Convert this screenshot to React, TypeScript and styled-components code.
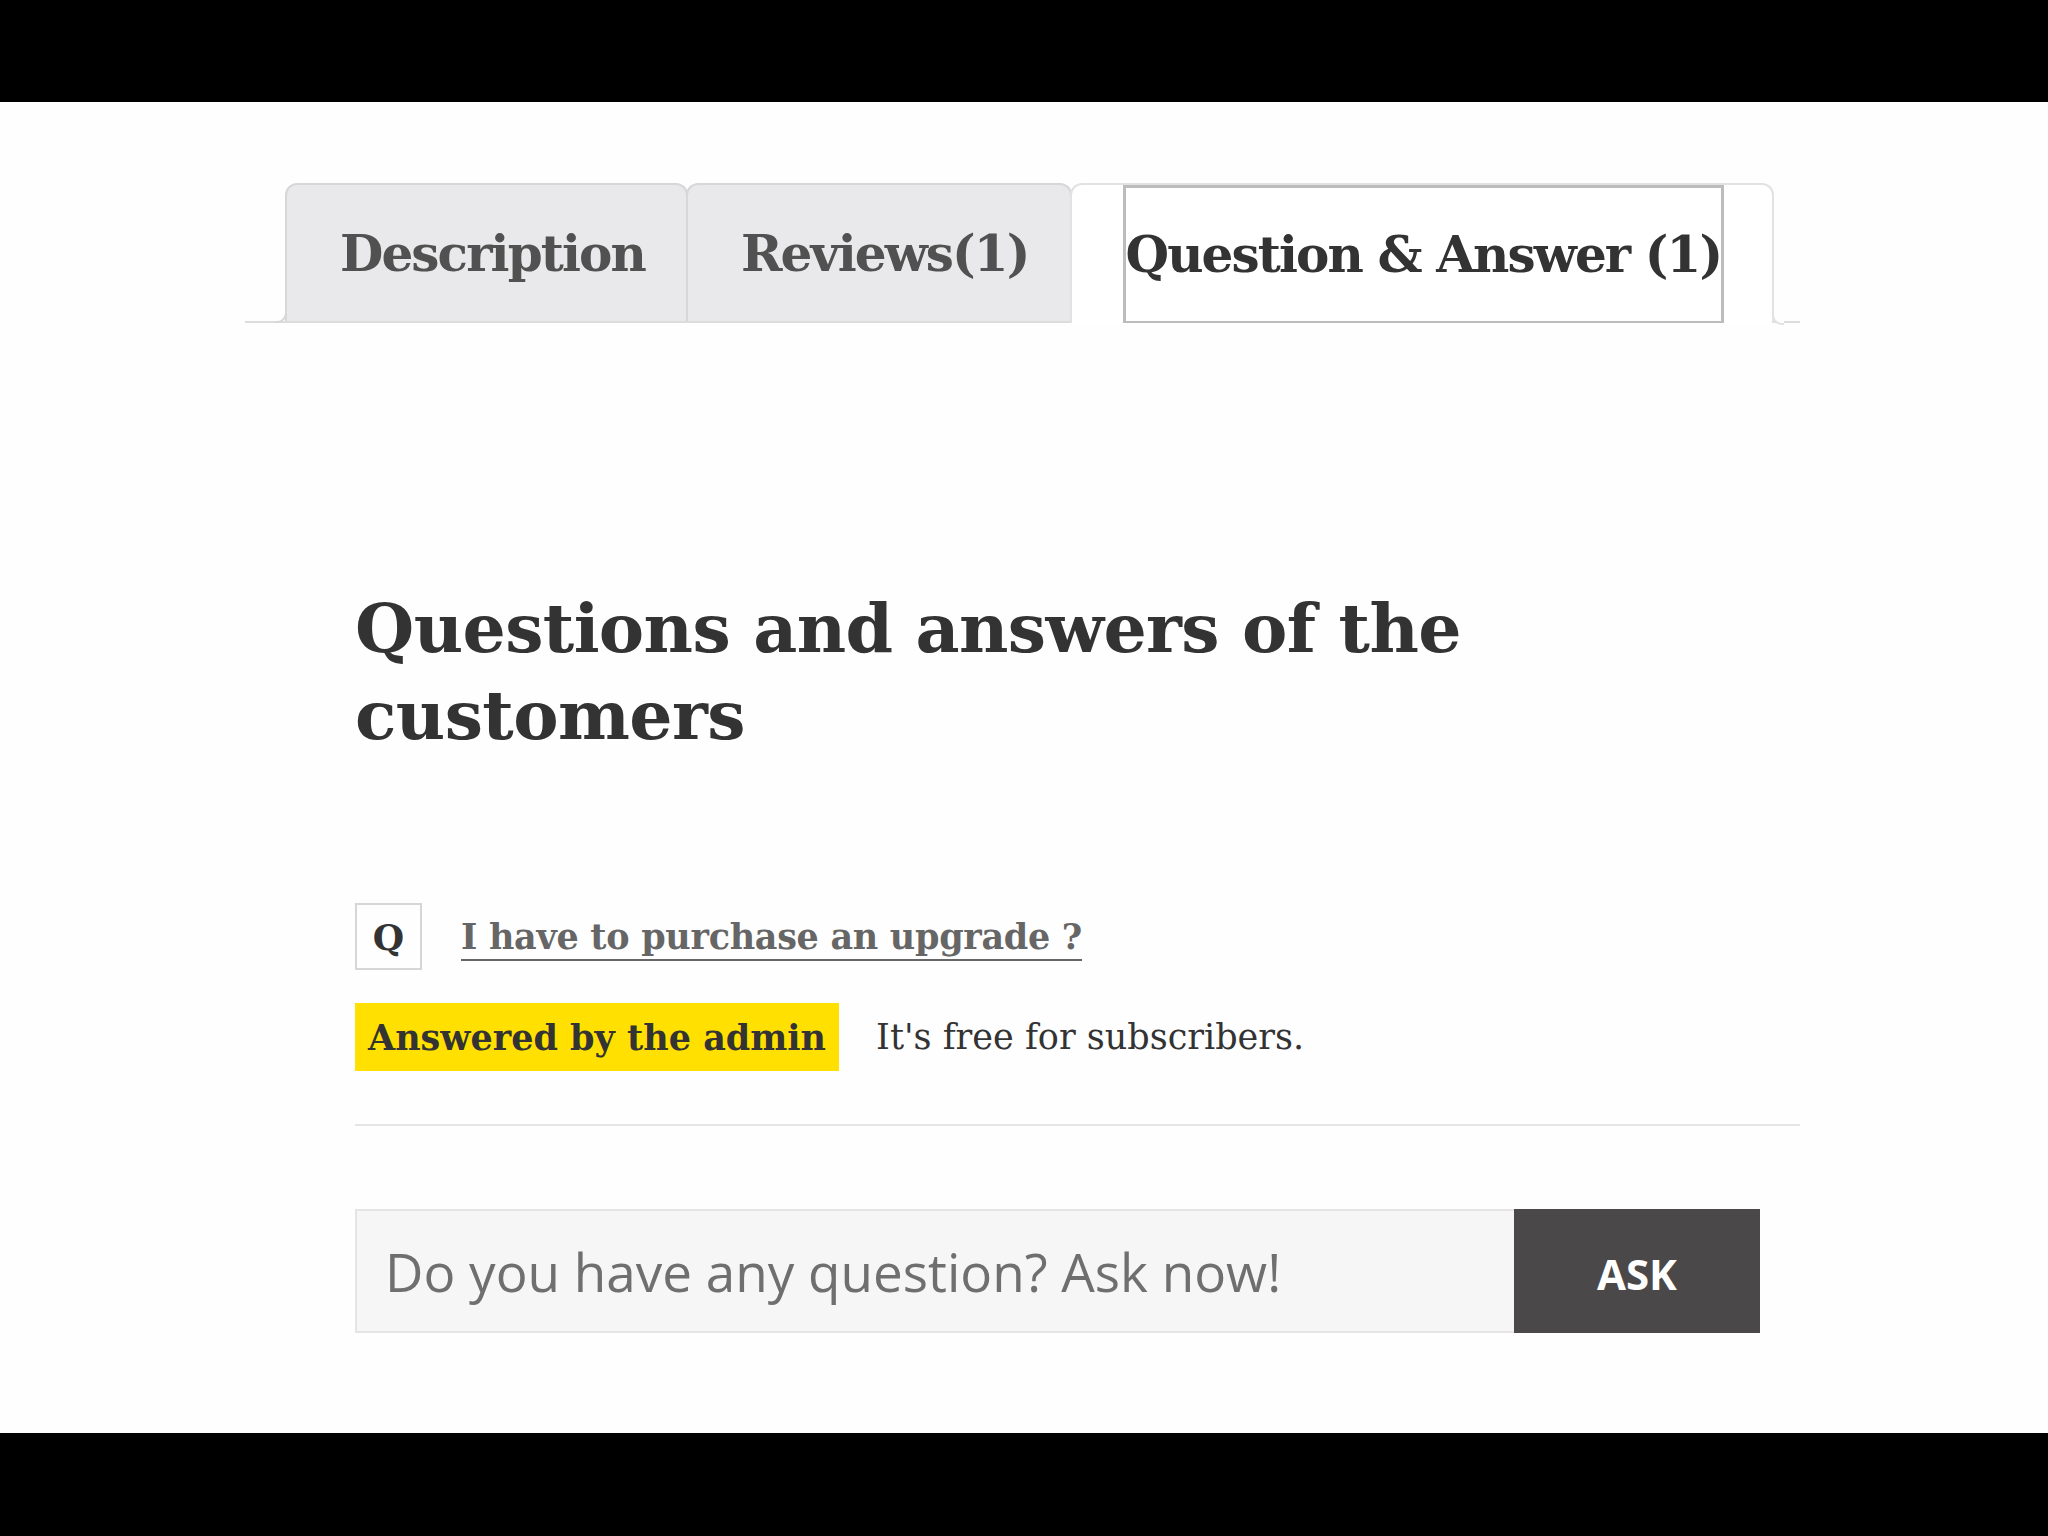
import { FC } from "react";
import styled, { createGlobalStyle } from "styled-components";

const GlobalStyle = createGlobalStyle`
  html, body {
    margin: 0;
    padding: 0;
    background: #000;
  }
  * {
    box-sizing: border-box;
  }
`;

const serif = `"DejaVu Serif", "Liberation Serif", serif`;
const sans = `"Open Sans", "Noto Sans", sans-serif`;

const tabs = [
  { id: 'description', label: 'Description' },
  { id: 'reviews', label: 'Reviews(1)' },
  { id: 'qa', label: 'Question & Answer (1)' },
];

const App: FC = () => {
  const activeTab = 'qa';

  return (
    <>
      <GlobalStyle />
      <S.Page>
        <S.Bar height={102} />
        <S.Main>
          <S.TabList>
            {tabs.map((tab, i) => (
              <S.Tab key={tab.id} active={tab.id === activeTab} first={i === 0}>
                <S.TabLink active={tab.id === activeTab}>{tab.label}</S.TabLink>
              </S.Tab>
            ))}
          </S.TabList>
          <S.Panel>
            <S.Heading>Questions and answers of the customers</S.Heading>
            <S.QuestionRow>
              <S.QBadge>Q</S.QBadge>
              <S.QuestionText>I have to purchase an upgrade ?</S.QuestionText>
            </S.QuestionRow>
            <S.AnswerRow>
              <S.AnswerBadge>Answered by the admin</S.AnswerBadge>
              <S.AnswerText>It's free for subscribers.</S.AnswerText>
            </S.AnswerRow>
            <S.Divider />
            <S.AskForm onSubmit={(e: React.FormEvent) => e.preventDefault()}>
              <S.AskInput type="text" placeholder="Do you have any question? Ask now!" />
              <S.AskButton type="submit">ASK</S.AskButton>
            </S.AskForm>
          </S.Panel>
        </S.Main>
        <S.Bar height={103} />
      </S.Page>
    </>
  );
};

export default App;

const S = {
  Page: styled.div`
    display: flex;
    flex-direction: column;
    width: 2048px;
    height: 1536px;
  `,
  Bar: styled.div<{ height: number }>`
    flex-shrink: 0;
    height: ${props => props.height}px;
    background: #000;
  `,
  Main: styled.div`
    flex: 1;
    background: #fefefe;
    padding: 81px 248px 0 245px;
  `,
  TabList: styled.ul`
    display: flex;
    align-items: flex-end;
    margin: 0;
    padding: 0 0 0 40px;
    list-style: none;
    border-bottom: 2px solid #dcdcdc;
  `,
  Tab: styled.li<{ active: boolean; first: boolean }>`
    position: relative;
    display: flex;
    height: 140px;
    margin-bottom: -2px;
    padding: ${props => props.active ? '0 48px 0 51px' : '0'};
    background: ${props => props.active ? '#fff' : '#e9e8ea'};
    border: 2px solid ${props => props.active ? '#e2e2e2' : '#d8d6d8'};
    border-bottom: ${props => props.active ? 'none' : '2px solid #dcdcdc'};
    border-radius: 12px 12px 0 0;

    & + & {
      margin-left: -2px;
    }

    /* little foot curving into the baseline */
    &::after {
      content: '';
      display: ${props => props.first || props.active ? 'block' : 'none'};
      position: absolute;
      bottom: -2px;
      ${props => props.first ? 'left: -12px;' : 'right: -12px;'}
      width: 10px;
      height: 10px;
      border-bottom: 2px solid ${props => props.active ? '#e2e2e2' : '#d8d6d8'};
      ${props => props.first
        ? 'border-right: 2px solid #d8d6d8; border-bottom-right-radius: 10px;'
        : 'border-left: 2px solid #e2e2e2; border-bottom-left-radius: 10px;'}
      background: #fefefe;
    }
  `,
  TabLink: styled.a<{ active: boolean }>`
    display: flex;
    align-items: center;
    padding: ${props => props.active ? '0' : '0 41px 0 53px'};
    font-family: ${serif};
    font-weight: 700;
    font-size: 50px;
    letter-spacing: -1.9px;
    color: ${props => props.active ? '#333' : '#515151'};
    border: ${props => props.active ? '3px solid #bcbcbc' : 'none'};
    border-bottom-width: ${props => props.active ? '2px' : '0'};
    background: ${props => props.active ? '#fff' : 'transparent'};
    white-space: nowrap;
    cursor: pointer;
  `,
  Panel: styled.div`
    padding-left: 110px;
  `,
  Heading: styled.h2`
    margin: 262px 0 0;
    max-width: 1160px;
    font-family: ${serif};
    font-weight: 700;
    font-size: 68px;
    line-height: 87px;
    letter-spacing: -0.6px;
    color: #333;
  `,
  QuestionRow: styled.div`
    display: flex;
    align-items: center;
    gap: 39px;
    margin-top: 144px;
  `,
  QBadge: styled.span`
    display: flex;
    align-items: center;
    justify-content: center;
    width: 67px;
    height: 67px;
    border: 2px solid #d6d6d6;
    font-family: ${serif};
    font-weight: 700;
    font-size: 36px;
    color: #333;
  `,
  QuestionText: styled.a`
    font-family: ${serif};
    font-weight: 700;
    font-size: 35px;
    letter-spacing: -0.3px;
    color: #666;
    text-decoration: underline;
    text-decoration-thickness: 2px;
    text-underline-offset: 10px;
    cursor: pointer;
  `,
  AnswerRow: styled.div`
    display: flex;
    align-items: center;
    gap: 37px;
    margin-top: 33px;
  `,
  AnswerBadge: styled.span`
    display: flex;
    align-items: center;
    height: 68px;
    padding: 0 13px;
    background: #ffe000;
    font-family: ${serif};
    font-weight: 700;
    font-size: 35px;
    color: #333;
  `,
  AnswerText: styled.span`
    font-family: ${serif};
    font-size: 35px;
    color: #333;
  `,
  Divider: styled.hr`
    margin: 53px 0 0;
    border: none;
    border-top: 2px solid #e6e4e6;
  `,
  AskForm: styled.form`
    display: flex;
    width: 1405px;
    height: 124px;
    margin-top: 83px;
  `,
  AskInput: styled.input`
    flex: 1;
    min-width: 0;
    padding: 0 28px;
    background: #f6f6f6;
    border: 2px solid #e6e4e6;
    border-right: none;
    font-family: ${sans};
    font-size: 53px;
    color: #333;
    outline: none;

    &::placeholder {
      color: #6f6f6f;
    }
  `,
  AskButton: styled.button`
    width: 246px;
    padding-top: 6px;
    border: none;
    background: #4a4849;
    font-family: ${sans};
    font-weight: 700;
    font-size: 42px;
    color: #fff;
    cursor: pointer;
  `,
};
